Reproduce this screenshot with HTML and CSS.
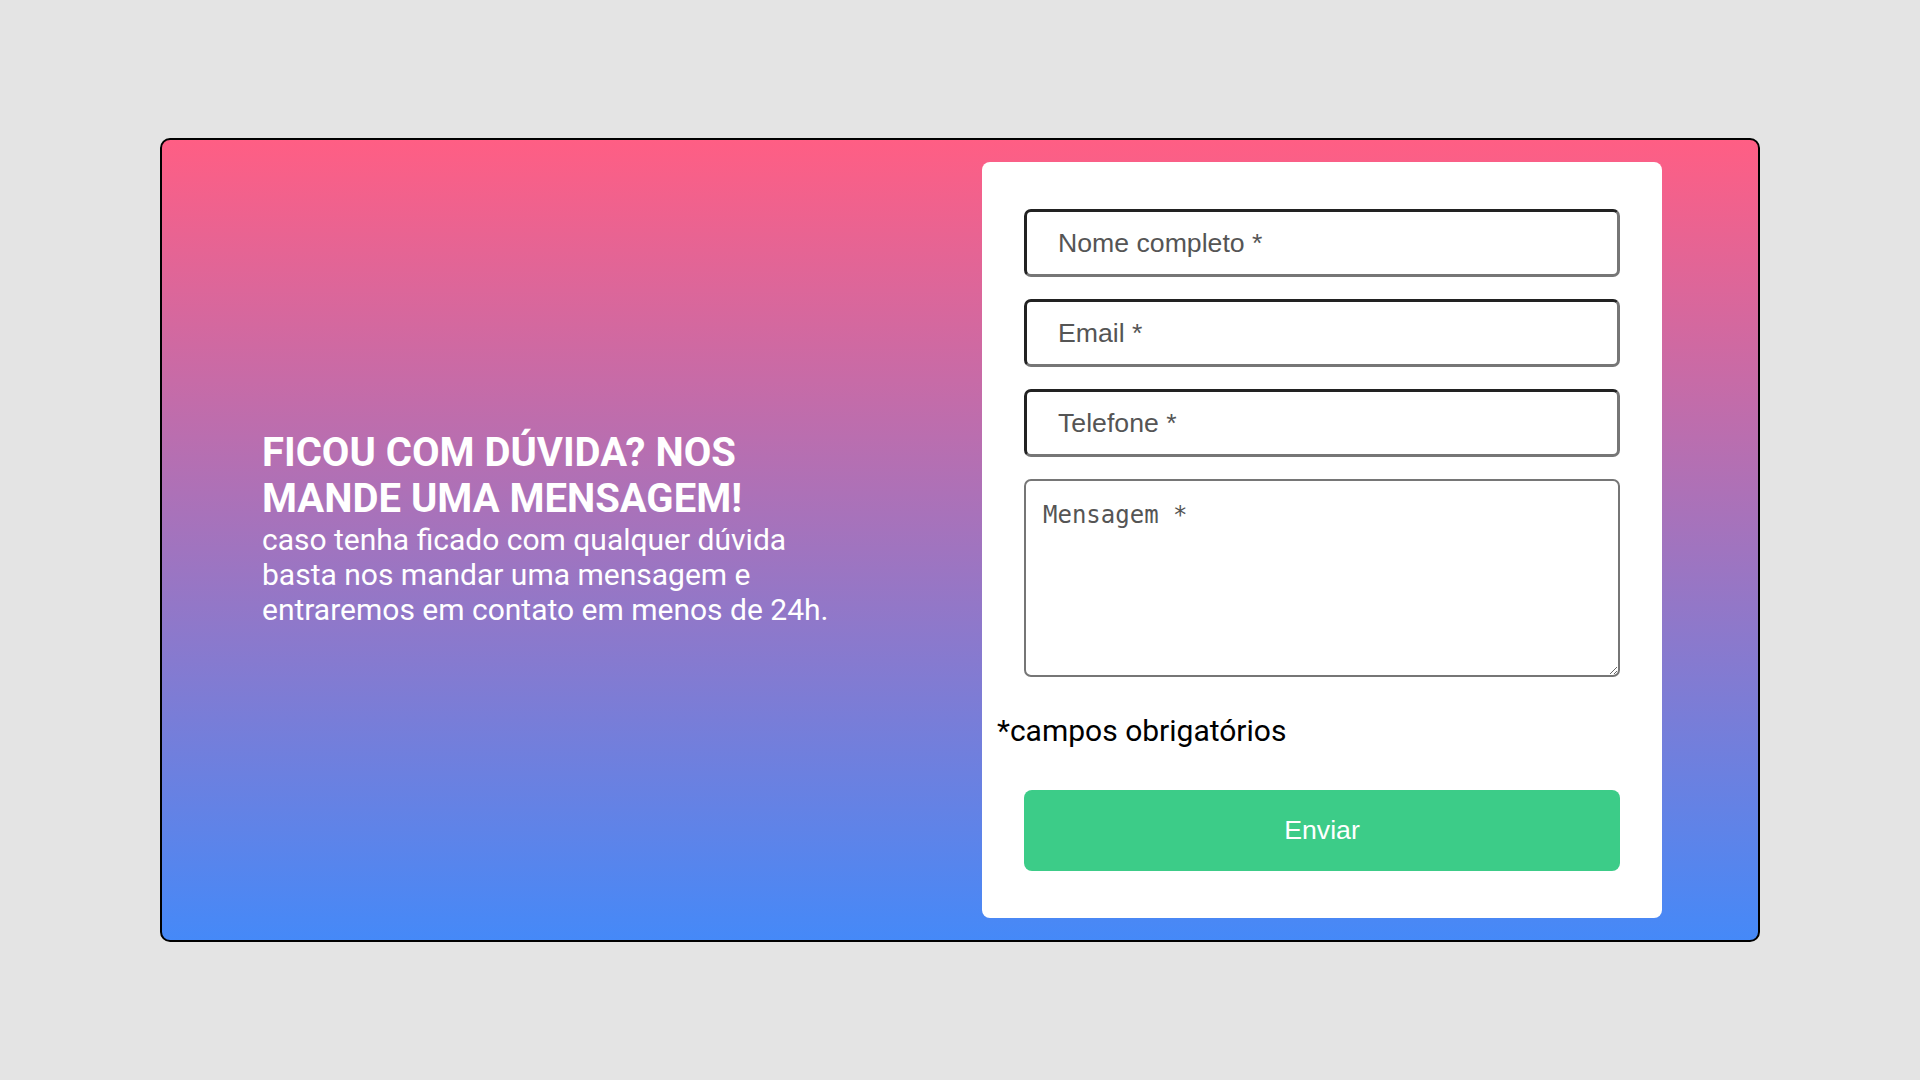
FILE: index.html
```html
<!DOCTYPE html>
<html lang="pt-BR">
<head>
<meta charset="utf-8">
<title>Contato</title>
<link rel="stylesheet" href="styles.css">
</head>
<body>
<section class="card">
  <div class="intro">
    <h1 class="intro-title">Ficou com dúvida? Nos mande uma mensagem!</h1>
    <p class="intro-text">caso tenha ficado com qualquer dúvida basta nos mandar uma mensagem e entraremos em contato em menos de 24h.</p>
  </div>
  <form class="panel">
    <input class="field" type="text" placeholder="Nome completo *">
    <input class="field" type="email" placeholder="Email *">
    <input class="field" type="tel" placeholder="Telefone *">
    <textarea class="message" placeholder="Mensagem *"></textarea>
    <p class="required">*campos obrigatórios</p>
    <button class="send" type="button">Enviar</button>
  </form>
</section>
</body>
</html>
```
FILE: styles.css
```css
* { box-sizing: border-box; }
html, body { margin: 0; padding: 0; }
body {
  background: #e4e4e4;
  height: 100vh;
  display: flex;
  align-items: center;
  justify-content: center;
  font-family: Roboto, "Liberation Sans", sans-serif;
}
.card {
  width: 1600px;
  height: 804px;
  border: 2px solid #000;
  border-radius: 10px;
  background: linear-gradient(to bottom, #ff5e84, #4589f8);
  display: flex;
  align-items: center;
  padding: 21px 96px 21px 100px;
}
.intro {
  flex: 1;
  padding-bottom: 23px;
}
.intro-title {
  margin: 0;
  width: 590px;
  font-family: Roboto, sans-serif;
  font-weight: 700;
  font-size: 40px;
  line-height: 46px;
  text-transform: uppercase;
  color: #fff;
}
.intro-text {
  margin: 0;
  width: 590px;
  font-family: Roboto, sans-serif;
  font-size: 30px;
  line-height: 35px;
  color: #fff;
}
.panel {
  width: 680px;
  height: 756px;
  background: #fff;
  border-radius: 8px;
  padding: 47px 42px 46px;
  display: flex;
  flex-direction: column;
}
.field {
  height: 68px;
  margin: 0 0 22px;
  border: 3px solid #222;
  border-right-color: #767676;
  border-bottom-color: #767676;
  border-radius: 7px;
  padding: 0 0 0 31px;
  font-family: "Liberation Sans", Arial, sans-serif;
  font-size: 26.67px;
  color: #333;
  background: #fff;
}
.field::placeholder { color: #555; }
.message {
  height: 198px;
  margin: 0;
  border: 2px solid #767676;
  border-radius: 7px;
  padding: 20px 17px 18px;
  font-family: "DejaVu Sans Mono", monospace;
  font-size: 24px;
  color: #333;
  resize: vertical;
}
.message::placeholder { color: #555; }
.required {
  margin: 36px 0 0 -27px;
  font-family: Roboto, sans-serif;
  font-size: 30px;
  line-height: 35px;
  color: #000;
}
.send {
  margin-top: 42px;
  height: 81px;
  border: 0;
  border-radius: 8px;
  background: #3ccc88;
  color: #fff;
  font-family: "Liberation Sans", Arial, sans-serif;
  font-size: 26.67px;
}
```
